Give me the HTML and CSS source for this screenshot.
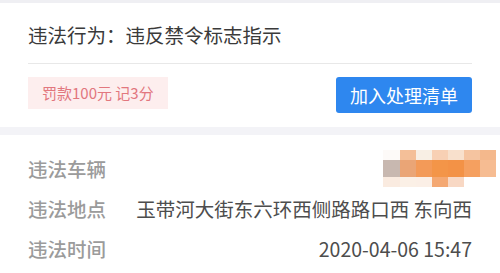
FILE: index.html
```html
<!DOCTYPE html>
<html lang="zh-CN">
<head>
<meta charset="utf-8">
<link rel="stylesheet" href="styles.css">
</head>
<body>
<div class="topbar"></div>
<section class="card">
  <div class="title">违法行为：违反禁令标志指示</div>
  <div class="actions">
    <span class="fine">罚款100元 记3分</span>
    <button class="add-btn">加入处理清单</button>
  </div>
</section>
<div class="band"></div>
<section class="details">
  <div class="row plate-row">
    <span class="label">违法车辆</span>
    <div class="plate">
      <i></i><i></i><i></i><i></i><i></i><i></i><i></i>
      <i></i><i></i><i></i><i></i><i></i><i></i><i></i>
      <i></i><i></i><i></i><i></i><i></i><i></i><i></i>
    </div>
  </div>
  <div class="row">
    <span class="label">违法地点</span>
    <span class="value">玉带河大街东六环西侧路路口西 东向西</span>
  </div>
  <div class="row">
    <span class="label">违法时间</span>
    <span class="value">2020-04-06 15:47</span>
  </div>
</section>
</body>
</html>
```
FILE: styles.css
```css
* { box-sizing: border-box; }
html, body {
  margin: 0;
  padding: 0;
  background: #fff;
  font-family: "Noto Sans CJK SC", "Noto Sans", sans-serif;
  overflow: hidden;
}
.topbar {
  height: 3px;
  background: #efeff3;
}
.card {
  padding: 0 28px;
}
.title {
  padding: 20px 0 16px;
  line-height: 24px;
  font-size: 19.5px;
  color: #3a3a3a;
  border-bottom: 1px solid #e8e8e8;
}
.actions {
  height: 63px;
  padding-top: 13px;
  display: flex;
  justify-content: space-between;
  align-items: flex-start;
}
.fine {
  height: 32px;
  line-height: 32px;
  padding: 0 14px;
  background: #fdeeee;
  color: #e2777e;
  font-size: 15px;
}
.add-btn {
  height: 36px;
  width: 136px;
  padding: 0;
  border: none;
  border-radius: 3px;
  background: #2e87ef;
  color: #fff;
  font-family: inherit;
  font-size: 18px;
  line-height: 36px;
}
.band {
  height: 8px;
  background: #f3f3f7;
}
.details {
  padding: 13.5px 28px 0;
}
.row {
  height: 40px;
  display: flex;
  align-items: center;
  justify-content: space-between;
  font-size: 19.5px;
}
.label {
  color: #9b9b9b;
  font-weight: 500;
}
.value {
  color: #4d4d4d;
}
.plate {
  margin-right: -24px;
  width: 113px;
  height: 37px;
  display: grid;
  grid-template-columns: 17px repeat(6, 16px);
  grid-template-rows: 10px 17px 10px;
}
.plate i:nth-child(1) { background: #fdfaf8; }
.plate i:nth-child(2) { background: #f4bf98; }
.plate i:nth-child(3) { background: #f8efe4; }
.plate i:nth-child(4) { background: #f8d0b4; }
.plate i:nth-child(5) { background: #f8e0cc; }
.plate i:nth-child(6) { background: #f5c4a0; }
.plate i:nth-child(7) { background: #f4b88c; }
.plate i:nth-child(8) { background: #c8b8b0; }
.plate i:nth-child(9) { background: #eaa576; }
.plate i:nth-child(10) { background: #f39a58; }
.plate i:nth-child(11) { background: #f39548; }
.plate i:nth-child(12) { background: #f39246; }
.plate i:nth-child(13) { background: #f5a060; }
.plate i:nth-child(14) { background: #f6bc92; }
.plate i:nth-child(15) { background: #faebe0; }
.plate i:nth-child(16) { background: #fbf0e6; }
.plate i:nth-child(17) { background: #fbefe6; }
.plate i:nth-child(18) { background: #f4a872; }
.plate i:nth-child(19) { background: #f8d8c4; }
.plate i:nth-child(20) { background: #fff; }
.plate i:nth-child(21) { background: #fff; }
```
